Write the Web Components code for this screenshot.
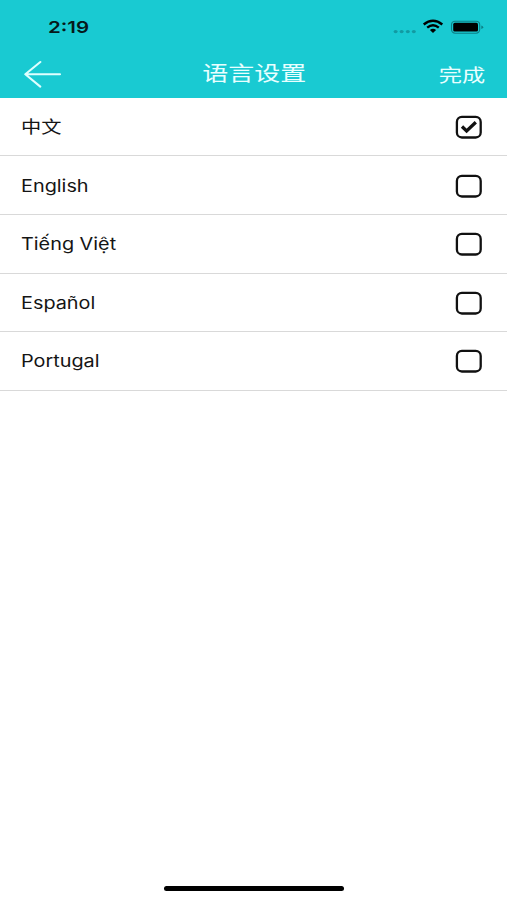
<!DOCTYPE html>
<html lang="zh">
<head>
<meta charset="utf-8">
<title>语言设置</title>
<style>
html,body{margin:0;height:100%;background:#fff}
body{font-family:Inter,"Noto Sans CJK SC",sans-serif;color:#151515;overflow:hidden}
</style>
</head>
<body>
<settings-screen></settings-screen>
<script>
const define = (name, html, setup) => customElements.define(name, class extends HTMLElement {
  connectedCallback() {
    if (this.shadowRoot) return;
    this.attachShadow({mode: 'open'}).innerHTML = html;
    if (setup) setup(this);
  }
});

// Text drawn with a horizontal stretch
define('wide-text', `<style>
:host{display:block;white-space:nowrap;transform:scaleX(var(--stretch,1.195));transform-origin:var(--origin,left) center}
</style><slot></slot>`);

define('status-bar', `<style>
:host{display:flex;height:54px;box-sizing:border-box;padding:0 23px 0 48px;align-items:center;justify-content:space-between;color:#06191b}
wide-text{font-size:16.5px;line-height:20px;font-weight:600;--stretch:1.24}
svg{display:block}
</style>
<wide-text>2:19</wide-text>
<svg width="92" height="20" viewBox="0 0 92 20">
  <g fill="#129aa2"><ellipse cx="3.6" cy="14.6" rx="2" ry="1.7"/><ellipse cx="9.6" cy="14.6" rx="2" ry="1.7"/><ellipse cx="15.8" cy="14.6" rx="2" ry="1.7"/><ellipse cx="21.8" cy="14.6" rx="2" ry="1.7"/></g>
  <g fill="none" stroke="#000" stroke-width="2.4"><path d="M31.7 7.5Q41 0 50.3 7.5"/><path d="M35.2 10.7Q41 5.9 46.8 10.7"/></g>
  <path d="M37.9 13Q41 10.4 44.1 13L41 16Z" fill="#000"/>
  <rect x="59.5" y="4.2" width="28.2" height="12" rx="3.6" fill="none" stroke="#0d7f86" stroke-width="1.1"/>
  <rect x="61.2" y="5.8" width="24.8" height="8.8" rx="1.6" fill="#000"/>
  <path d="M89.3 8.4Q91.2 8.9 91.2 10.2T89.3 12Z" fill="#0d7f86"/>
</svg>`);

define('nav-bar', `<style>
:host{display:grid;grid-template-columns:1fr auto 1fr;height:43.5px;padding:0 22px 0 23px;box-sizing:border-box;align-items:start;color:#e9ffff}
svg{display:block;margin-top:6px}
.title{font-size:20.6px;line-height:30px;margin-top:5px;--origin:center;--stretch:1.26}
.done{font-size:18.6px;line-height:30px;margin-top:6px;justify-self:end;--origin:right;--stretch:1.25}
</style>
<svg width="40" height="28" viewBox="0 0 40 28" fill="none" stroke="#dfffff" stroke-width="2.1" stroke-linecap="round" stroke-linejoin="round"><path d="M17.3 2L2.3 14.3L17.3 26.6M2.3 14.3H37"/></svg>
<wide-text class="title">语言设置</wide-text>
<wide-text class="done">完成</wide-text>`);

define('check-box', `<style>:host{display:block}svg{display:block}.tick{display:none}:host([checked]) .tick{display:block}</style>
<svg width="28" height="24" viewBox="0 0 28 24" fill="none" stroke="#111">
<rect x="1.9" y="1.9" width="23.8" height="20.6" rx="5" stroke-width="2.3"/>
<path class="tick" d="M7 11.5L11.6 15.9L20.8 7.3" stroke-width="3.3"/></svg>`);

define('language-row', `<style>
:host{display:flex;height:58.6px;box-sizing:border-box;padding:1px 24px 0 21px;align-items:center;justify-content:space-between;border-bottom:1px solid #d9d9d9}
wide-text{font-size:16.6px;line-height:24px}
</style><wide-text><slot></slot></wide-text><check-box></check-box>`, el => {
  const q = s => el.shadowRoot.querySelector(s);
  if (el.hasAttribute('selected')) q('check-box').setAttribute('checked', '');
  if (el.hasAttribute('stretch')) q('wide-text').style.setProperty('--stretch', el.getAttribute('stretch'));
});

define('home-indicator', `<style>:host{display:block;width:180px;height:5px;border-radius:3px;background:#000;margin:auto auto 9px 164px}</style>`);

define('settings-screen', `<style>
:host{display:flex;flex-direction:column;height:100vh;background:#fff}
header{background:#19cad2;height:97.5px;flex:none}
main{padding-top:.3px}
</style>
<header><status-bar></status-bar><nav-bar></nav-bar></header>
<main>
<language-row selected stretch="1.22">中文</language-row>
<language-row>English</language-row>
<language-row>Tiếng Việt</language-row>
<language-row>Español</language-row>
<language-row>Portugal</language-row>
</main>
<home-indicator></home-indicator>`);
</script>
</body>
</html>
